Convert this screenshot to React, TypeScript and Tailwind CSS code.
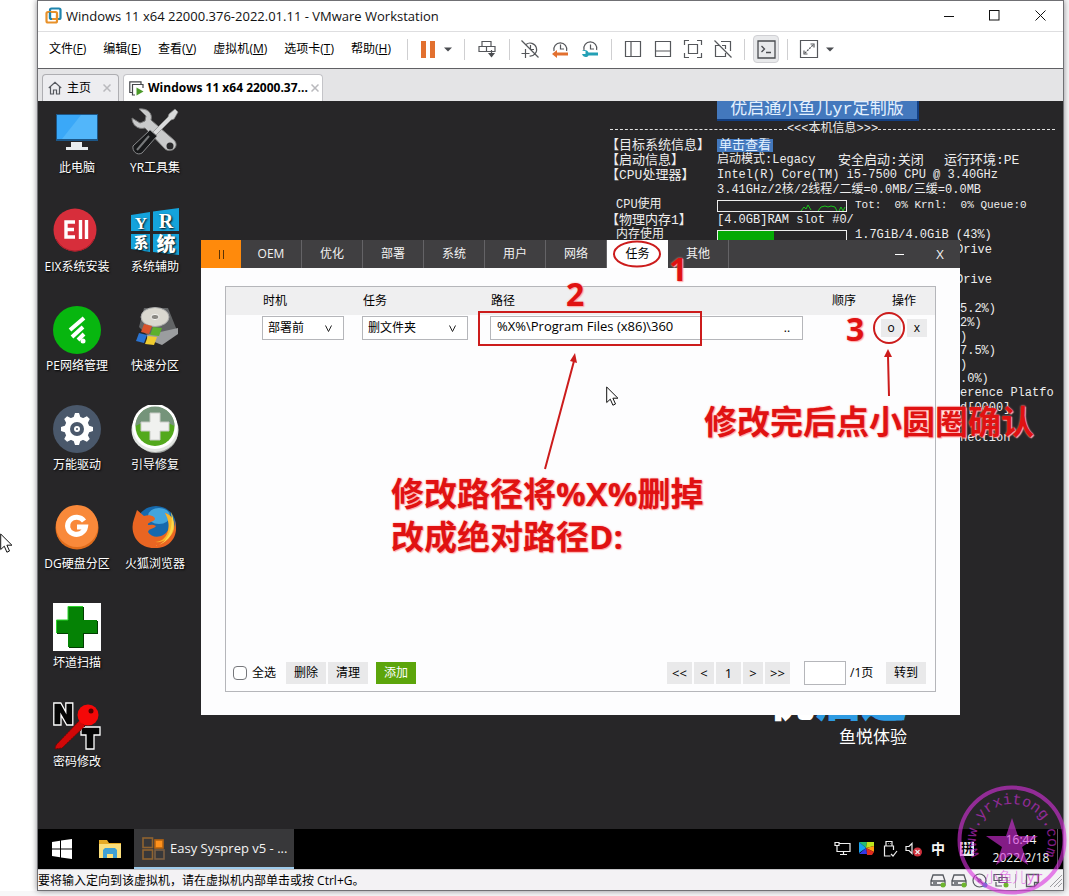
import type { ReactNode } from "react";

const ui = "font-['Open_Sans','Noto_Sans_CJK_SC',sans-serif]";
const mono = "font-['Liberation_Mono','Noto_Sans_CJK_SC',monospace]";

/* ---------- title bar, menu and toolbar ---------- */

function VmwareLogo() {
  return (
    <svg width="17" height="17" viewBox="0 0 17 17" fill="none" strokeWidth="2.2">
      <rect x="5" y="1.5" width="10.5" height="10.5" rx="1.5" stroke="#1f84ad" />
      <rect x="1.5" y="5" width="10.5" height="10.5" rx="1.5" stroke="#e8912a" />
      <path d="M5 12V5.200" stroke="#1f84ad" />
      <path d="M7 12h5V8" stroke="#e8912a" />
    </svg>
  );
}

function TitleBar() {
  return (
    <header className="flex h-[31px] items-center border-b border-[#dedee0] bg-white pb-px pl-[7px]">
      <VmwareLogo />
      <h1 className="ml-1 flex-1 whitespace-nowrap text-[13px] leading-5 text-[#111]">
        Windows 11 x64 22000.376-2022.01.11 - VMware Workstation
      </h1>
      <button aria-label="最小化" className="flex h-[28px] w-[45px] items-center justify-center">
        <svg width="11" height="11" stroke="#111"><path d="M0 6.500h10" /></svg>
      </button>
      <button aria-label="最大化" className="flex h-[28px] w-[45px] items-center justify-center">
        <svg width="11" height="11" stroke="#111" fill="none"><rect x=".5" y=".5" width="9.500" height="9.500" /></svg>
      </button>
      <button aria-label="关闭" className="flex h-[28px] w-[46px] items-center justify-center">
        <svg width="11" height="11" stroke="#111"><path d="M.5 .5l10 10M10.500 .5l-10 10" /></svg>
      </button>
    </header>
  );
}

const menus = [
  ["文件", "F"],
  ["编辑", "E"],
  ["查看", "V"],
  ["虚拟机", "M"],
  ["选项卡", "T"],
  ["帮助", "H"],
];

function ToolIcon({ children, label }: { children: ReactNode; label: string }) {
  return (
    <button aria-label={label} className="flex h-[28px] w-[30px] items-center justify-center">
      <svg width="20" height="20" viewBox="0 0 20 20" fill="none" stroke="#55575b" strokeWidth="1.2">
        {children}
      </svg>
    </button>
  );
}

function Sep() {
  return <span className="h-[21px] w-px bg-[#cfcfd1]" />;
}

function Caret() {
  return (
    <svg width="8" height="5" viewBox="0 0 8 5"><path d="M0 .5h8L4 4.500z" fill="#4a4c50" /></svg>
  );
}

function MenuBar() {
  return (
    <div className="flex h-[37px] items-center border-b border-[#606064] bg-white pb-[2px] pl-[11px]">
      <nav className="flex w-[358px] gap-[17px] whitespace-nowrap text-[12px] leading-4 text-black">
        {menus.map(([name, key]) => (
          <button key={key}>
            {name}(<u>{key}</u>)
          </button>
        ))}
      </nav>
      <Sep />
      <button aria-label="挂起" className="ml-[13px] flex gap-1">
        <span className="h-[17px] w-[5px] bg-[#e2702f]" />
        <span className="h-[17px] w-[5px] bg-[#e2702f]" />
      </button>
      <button aria-label="电源选项" className="mr-3 ml-[9px] py-2"><Caret /></button>
      <Sep />
      <div className="px-[7px]">
        <ToolIcon label="发送 Ctrl+Alt+Del">
          <path d="M5 2.500h9v5H5zM2 7.500h7.500v5H2zM9.500 7.500H18v5H9.500z" />
          <path d="M14.500 11v4" />
          <path d="M11 14h7l-3.500 4.500z" fill="#4a4c50" stroke="none" />
        </ToolIcon>
      </div>
      <Sep />
      <div className="ml-[5px] flex">
        <ToolIcon label="拍摄快照">
          <path d="M6 5.500a6.500 6.500 0 1 1 3.500 11.500M10.500 6v4.500H14M1.500 1.500l17 17M5.500 10v9M1.500 14.500h8" />
        </ToolIcon>
        <ToolIcon label="恢复快照">
          <path d="M4 12a6.500 6.500 0 1 1 12.600 0M10.500 5.500V10H14" />
          <path d="M2 15l5-4v2.500h11v3H7V19z" fill="#e2702f" stroke="none" />
        </ToolIcon>
        <ToolIcon label="管理快照">
          <path d="M4 11a6.500 6.500 0 1 1 12.600 0M10.500 5.500V10H14" />
          <path d="M2 12h3.500v3H2c1 3.500 5 4 6.500 1.500H18v-3H8.500C7 10.500 3.500 10.500 2 12z" fill="#24a0b5" stroke="none" />
        </ToolIcon>
      </div>
      <span className="mr-[6px] ml-[6px] h-[21px] w-px bg-[#cfcfd1]" />
      <div className="mr-[6px] flex">
        <ToolIcon label="显示库"><path d="M2.500 2.500h15v15h-15zM8 2.500v15" /></ToolIcon>
        <ToolIcon label="缩略图栏"><path d="M2.500 2.500h15v15h-15zM2.500 12h15" /></ToolIcon>
        <ToolIcon label="全屏"><path d="M1.500 6V1.500H6M14 1.500h4.500V6M18.500 14v4.500H14M6 18.500H1.500V14M5.500 5.500h9v9h-9z" /></ToolIcon>
        <ToolIcon label="Unity"><path d="M8 2.500h9.500v9.500M6 6.500H2.500V17.500h10V14M9 6.500h3.500V10M1.500 1.500l17 17" /></ToolIcon>
      </div>
      <Sep />
      <button aria-label="控制台视图" className="mx-[8px] flex h-[28px] w-[26px] items-center justify-center rounded-sm border border-[#d0d0d4] bg-[#e8e9eb]">
        <svg width="19" height="19" viewBox="0 0 19 19" fill="none" stroke="#4a4c50" strokeWidth="1.3">
          <path d="M1 1h17v17H1zM4.500 6l3 3-3 3M9 12.500h5" />
        </svg>
      </button>
      <Sep />
      <div className="ml-[6px]">
        <ToolIcon label="自由拉伸">
          <path d="M1.500 1.500h17v17h-17z" />
          <path d="M11.500 5h3.500v3.500M8.500 15H5v-3.500" />
          <path d="M6 14l8-8" strokeDasharray="2 1" />
        </ToolIcon>
      </div>
      <button aria-label="拉伸选项" className="ml-[2px] py-2"><Caret /></button>
    </div>
  );
}

function TabClose() {
  return (
    <svg width="8" height="8" stroke="#b9b9bd" strokeWidth="1.500"><path d="M.5 .5l7 7M7.500 .5l-7 7" /></svg>
  );
}

function TabBar() {
  return (
    <div className="flex h-[32px] items-end gap-1 bg-[#e4e4e6] pl-1 text-[12px] leading-4 text-black">
      <button className="flex h-[27px] w-[77px] items-center rounded-t border border-b-0 border-[#aeaeb2] bg-[#ededf0] pl-[5px]">
        <svg width="14" height="14" viewBox="0 0 14 14" fill="none" stroke="#55585e" strokeWidth="1.200">
          <path d="M.8 7L7 1.200 13.200 7M2.500 6v7H5.500V9h3v4h3V6" />
        </svg>
        <span className="mr-[12px] ml-[5px]">主页</span>
        <TabClose />
      </button>
      <button className="flex h-[27px] w-[200px] items-center rounded-t border border-b-0 border-[#c4c4c8] bg-white pl-[5px]">
        <svg width="15" height="15" viewBox="0 0 15 15" fill="none" stroke="#45474b" strokeWidth="1.200">
          <path d="M3 11.500H.8V.8H12V3M6 14H3.500V3.500H14V7" />
          <path d="M7.500 6.500l7 4-7 4z" fill="#4c9a2a" stroke="none" />
        </svg>
        <span className="mr-[3px] ml-1 whitespace-nowrap font-bold">Windows 11 x64 22000.37...</span>
        <TabClose />
      </button>
    </div>
  );
}

/* ---------- desktop icons ---------- */

const glyphs: Record<string, ReactNode> = {
  pc: (
    <>
      <rect x="3" y="6" width="42" height="27" fill="#1c5687" />
      <rect x="4" y="7" width="40" height="24" fill="#3aa8f8" />
      <path d="M28 7h16v24H9z" fill="#52b6fa" />
      <path d="M18 34h11v5h6v3H13v-3h5z" fill="#e9edf0" />
    </>
  ),
  tools: (
    <>
      <path d="M1 10l8 5 5-2 1-5-7-7c8-1 14 4 12 11l23 20c6 6-2 14-9 9L14 20C7 22 1 17 1 10z" fill="#c9cacb" stroke="#777" />
      <circle cx="39" cy="38" r="3.500" fill="#29292b" />
      <path d="M44 1l3 3-4 7-3 1-17 17-3-3 17-17 1-3z" fill="#d9dadb" stroke="#888" strokeWidth=".7" />
      <path d="M19 22l7 6-15 17c-5 3-10-2-9-7z" fill="#17181a" stroke="#8b8c8e" />
      <path d="M18 28L6 42" stroke="#77797b" strokeWidth="2" />
    </>
  ),
  eix: (
    <>
      <circle cx="22" cy="23" r="21.500" fill="#d72e3b" />
      <path d="M3 32a21 21 0 0 0 38 0" fill="none" stroke="#a81f2c" />
      <path d="M22 15H13v15h9M13 22.500h8M27.500 13v19M33.500 13v19" fill="none" stroke="#fff" strokeWidth="3.400" />
    </>
  ),
  yr: (
    <>
      <path d="M0 8l19-3v19H0zM22 4.500L48 1v23H22zM0 27h19v18L0 42zM22 27h26v21l-26-3z" fill="#14a3dc" />
      <g fill="#fff" fontWeight="900" textAnchor="middle">
        <text x="10" y="22" fontSize="17" fontFamily="Liberation Serif, serif">Y</text>
        <text x="35" y="21" fontSize="20" fontFamily="Liberation Serif, serif">R</text>
        <text x="10" y="41" fontSize="15" fontFamily="Noto Sans CJK SC, sans-serif">系</text>
        <text x="35" y="44" fontSize="19" fontFamily="Noto Sans CJK SC, sans-serif">统</text>
      </g>
    </>
  ),
  net: (
    <>
      <circle cx="24" cy="24" r="24" fill="#07b60f" />
      <path d="M17 24l14-12M19 31l11-10M25 34l6-6" stroke="#fff" strokeWidth="4" />
      <circle cx="30" cy="35" r="2.500" fill="#fff" />
    </>
  ),
  disk: (
    <>
      <path d="M13 2h24l10 25-17 11-14-9-8-8z" fill="#626466" />
      <path d="M16 29l31-7v6L31 39 16 33z" fill="#9b9d9f" />
      <ellipse cx="24" cy="11" rx="14" ry="9.500" fill="#dad8d0" stroke="#aaa" />
      <ellipse cx="24" cy="11" rx="4" ry="2.600" fill="#8b8a85" stroke="#f4f4f0" />
      <path d="M13 18l8 2-3 8-8-2z" fill="#d9532c" />
      <path d="M22 21l9 1-3 8-9-1z" fill="#5cb02e" />
      <path d="M8 27l8 2-3 8-8-2z" fill="#2b73d0" />
      <path d="M17 30l9 1-3 8-9-1z" fill="#f1cc2f" />
    </>
  ),
  gear: (
    <>
      <circle cx="24" cy="24" r="24" fill="#4a586b" />
      <g fill="#fff">
        <circle cx="24" cy="24" r="12.500" />
        {[0, 45, 90, 135].map((a) => (
          <path key={a} d="M22 8h4l2 6v20l-2 6h-4l-2-6V14z" transform={`rotate(${a} 24 24)`} />
        ))}
      </g>
      <circle cx="24" cy="24" r="7" fill="#4a586b" />
      <circle cx="24" cy="24" r="3" fill="#fff" />
      <circle cx="24" cy="24" r="1" fill="#4a586b" />
    </>
  ),
  repair: (
    <>
      <ellipse cx="25" cy="27" rx="22" ry="21" fill="#9fa3a0" />
      <ellipse cx="24" cy="25" rx="23.500" ry="22" fill="#e2e5e2" />
      <circle cx="24" cy="21.500" r="22.500" fill="#fff" />
      <circle cx="24" cy="21.500" r="19.500" fill="#53a91d" />
      <path d="M4.500 21a19.500 19.500 0 0 1 39 0c-10-6-29-6-39 0z" fill="#75947a" />
      <path d="M19 8h10v9h9v9h-9v9H19v-9h-9v-9h9z" fill="#f0f1ef" stroke="#c8cbc6" />
    </>
  ),
  dg: (
    <>
      <circle cx="24" cy="24" r="21.500" fill="#e06d1c" />
      <circle cx="24" cy="22" r="21" fill="#f9893a" />
      <path d="M31 17a9 8.500 0 1 0 1.500 6H24" fill="none" stroke="#fff" strokeWidth="5" />
    </>
  ),
  fox: (
    <>
      <circle cx="25" cy="22" r="20" fill="#1669ad" />
      <ellipse cx="28" cy="12" rx="11" ry="8" fill="#43a5dd" />
      <path d="M6 6l7 6c5-2 11 0 11 3-1 3-8 3-7 6 2 0 5-1 8 1-2 3-7 2-8 6 4 7 16 6 20-2 2-5 1-12-3-17 7 2 10 9 9 16 1-3 1-8 0-11 7 18-5 31-20 30C6 44-2 28 3 15z" fill="#e96522" />
      <path d="M34 9c7 2 10 9 9 16-2 9-11 14-19 13 12 0 18-15 10-29z" fill="#f9b62c" />
      <path d="M40 8c7 15 0 31-16 34 12-2 19-17 16-34z" fill="#fbd84b" />
    </>
  ),
  cross: (
    <>
      <path d="M0 0h48v48H0z" fill="#fff" />
      <path d="M16 4h15v14h14v13H31v14H16V31H4V18h12z" fill="#003e00" />
      <path d="M15 3h15v14h14v13H30v14H15V30H3V17h12z" fill="#058205" />
      <path d="M15 17V3.500h15M3.500 30V17H15" fill="none" stroke="#2bd52b" />
    </>
  ),
  nt: (
    <>
      <g fill="#050505" stroke="#fff" strokeWidth="1.300">
        <path d="M.8 1h7l5 9V1h7v22h-6L8 13v10H.8z" />
        <path d="M28 25h19v8h-6v14h-8V33h-5z" />
      </g>
      <path d="M3 43L27 18l5 6L9 46l-7 1z" fill="#d00808" stroke="#780000" strokeDasharray="2 1" />
      <circle cx="35" cy="13" r="10.500" fill="#f50808" />
      <circle cx="38" cy="9" r="2.500" fill="#550000" />
    </>
  ),
};

const shortcuts = [
  ["pc", "此电脑"],
  ["eix", "EIX系统安装"],
  ["net", "PE网络管理"],
  ["gear", "万能驱动"],
  ["dg", "DG硬盘分区"],
  ["cross", "坏道扫描"],
  ["nt", "密码修改"],
  ["tools", "YR工具集"],
  ["yr", "系统辅助"],
  ["disk", "快速分区"],
  ["repair", "引导修复"],
  ["fox", "火狐浏览器"],
];

function Shortcuts() {
  return (
    <div className="grid w-[156px] grid-flow-col grid-cols-2 grid-rows-[repeat(7,99px)] pt-[7px]">
      {shortcuts.map(([icon, label]) => (
        <button key={icon} className="flex flex-col items-center gap-1 text-[12px] leading-4 text-white [text-shadow:1px_1px_2px_#000]">
          <svg width="48" height="48" viewBox="0 0 48 48">{glyphs[icon]}</svg>
          <span className="whitespace-nowrap">{label}</span>
        </button>
      ))}
    </div>
  );
}

/* ---------- system information on the wallpaper ---------- */

function InfoRow({ name, inset, children }: { name?: string; inset?: boolean; children?: ReactNode }) {
  return (
    <div className="flex h-[15px] items-center">
      <span className={inset ? "w-[111px] shrink-0 pl-[10px]" : "w-[111px] shrink-0 text-[13px]"}>{name}</span>
      {children}
    </div>
  );
}

const clipped = ["", "5.2%)", "2%)", ")", "7.5%)", ")", ".0%)"];

function SystemInfo() {
  return (
    <section className={`absolute top-0 left-[568px] w-[450px] overflow-hidden whitespace-pre text-[12px] leading-[15px] text-[#ededed] ${mono}`}>
      <button className="ml-[111px] flex h-[20px] w-[202px] items-center justify-center border-r-2 border-b-2 border-[#123f83] bg-[#4378bd] text-[17px] leading-5 text-[#e3f1ff]">
        优启通小鱼儿yr定制版
      </button>
      <div className="flex h-[17px] items-center pr-px pl-1">
        <span className="flex-1 border-t border-dashed border-[#e0e0e0]" />
        <span>{"<<<"}本机信息{">>>"}</span>
        <span className="flex-1 border-t border-dashed border-[#e0e0e0]" />
      </div>
      <InfoRow name="【目标系统信息】">
        <button className="h-[13px] bg-[#4378bd] px-[2px] text-[13px] leading-[13px] text-[#e3f1ff]">单击查看</button>
      </InfoRow>
      <InfoRow name="【启动信息】">
        <span className="w-[121px]">启动模式:Legacy</span>
        <span className="w-[106px] text-[13px]">安全启动:关闭</span>
        <span className="text-[13px]">运行环境:PE</span>
      </InfoRow>
      <InfoRow name="【CPU处理器】">Intel(R) Core(TM) i5-7500 CPU @ 3.40GHz</InfoRow>
      <InfoRow>3.41GHz/2核/2线程/二缓=0.0MB/三缓=0.0MB</InfoRow>
      <InfoRow name="CPU使用" inset>
        <svg width="130" height="12" fill="none">
          <rect x=".5" y=".5" width="129" height="11" stroke="#eee" />
          <path d="M84 11l3-4 2 2 2-4 3 5M101 11l3-4 4-1 3 1 3-1 4 1 2 4M122 11l2-4 2 4 2-4" stroke="#1bc51b" />
        </svg>
        <span className="ml-2 text-[11px]">Tot:  0% Krnl:  0% Queue:0</span>
      </InfoRow>
      <InfoRow name="【物理内存1】">[4.0GB]RAM slot #0/</InfoRow>
      <InfoRow name="内存使用" inset>
        <span className="h-[12px] w-[130px] border border-[#eee]"><span className="block h-[10px] w-[56px] bg-[#04a904]" /></span>
        <span className="ml-2">1.7GiB/4.0GiB (43%)</span>
      </InfoRow>
      <div className="pl-[350px]">
        <p>Drive</p>
        <p className="mt-[15px]">Drive</p>
        <div className="pl-1 leading-[14px]">
          {clipped.map((t, i) => (
            <p key={i} className="h-[14px]">{t}</p>
          ))}
        </div>
        <p className="pl-1">erence Platfo</p>
        <p className="pl-1">d[0000]</p>
        <p className="mt-[15px] pl-1">nection</p>
      </div>
    </section>
  );
}

/* ---------- Easy Sysprep dialog ---------- */

const dialogTabs = ["OEM", "优化", "部署", "系统", "用户", "网络", "任务", "其他"];
const gray = "flex h-[22px] items-center justify-center bg-[#e9e9ea]";

function Choice({ label, value, width }: { label: string; value: string; width: string }) {
  return (
    <label className={`relative flex h-6 items-center ${width}`}>
      <select aria-label={label} className="h-6 w-full appearance-none border border-[#b5b6ba] bg-white pl-[5px]">
        <option>{value}</option>
      </select>
      <svg className="pointer-events-none absolute right-3" width="7" height="7" fill="none" stroke="#222"><path d="M.5 .5l3 6 3-6" /></svg>
    </label>
  );
}

function Dialog() {
  return (
    <section className="absolute top-[139px] left-[163px] flex h-[475px] w-[759px] flex-col bg-[#fdfdfe] text-[12px] leading-4 text-black">
      <div className="flex h-[28px] items-stretch bg-[#403f41] text-[#f2f2f2]">
        <button aria-label="菜单" className="flex w-[40px] items-center justify-center gap-[3px] bg-[#ff8a0c]">
          <span className="h-[9px] w-px bg-[#5b3205]" />
          <span className="h-[9px] w-px bg-[#5b3205]" />
        </button>
        {dialogTabs.map((t) => (
          <button key={t} className={t === "任务" ? "w-[61px] bg-white text-black" : "w-[61px] border-r border-[#646366]"}>
            {t}
          </button>
        ))}
        <span className="flex-1" />
        <button aria-label="最小化" className="flex w-[41px] items-center justify-center"><span className="h-px w-[9px] bg-white" /></button>
        <button className="w-[40px] text-[13px]">X</button>
      </div>
      <div className="mx-6 mt-[18px] mb-[23px] flex flex-1 flex-col justify-between border border-[#b5b6ba]">
        <table className="w-full table-fixed border-collapse text-left">
          <colgroup>
            <col className="w-[36px]" />
            <col className="w-[100px]" />
            <col className="w-[128px]" />
            <col />
            <col className="w-[49px]" />
            <col className="w-[55px]" />
          </colgroup>
          <thead>
            <tr className="h-[28px] bg-[#efeff0]">
              <th />
              <th className="pl-px font-normal">时机</th>
              <th className="pl-px font-normal">任务</th>
              <th className="pl-px font-normal">路径</th>
              <th className="pl-px font-normal">顺序</th>
              <th className="pl-[12px] font-normal">操作</th>
            </tr>
          </thead>
          <tbody>
            <tr className="h-[26px]">
              <td />
              <td><Choice label="时机" value="部署前" width="w-[82px]" /></td>
              <td><Choice label="任务" value="删文件夹" width="w-[106px]" /></td>
              <td>
                <div className="mr-7 flex h-6 border border-[#b5b6ba] bg-white">
                  <input aria-label="路径" defaultValue="%X%\Program Files (x86)\360" className="min-w-0 flex-1 bg-transparent pb-1 pl-[6px] text-[13px] outline-none" />
                  <button aria-label="浏览" className="w-[30px]">..</button>
                </div>
              </td>
              <td />
              <td>
                <div className="flex gap-[6px] pl-px">
                  <button aria-label="确认" className="h-[18px] w-5 bg-[#ebebec] leading-4">o</button>
                  <button aria-label="删除任务" className="h-[18px] w-5 bg-[#ebebec] leading-4">x</button>
                </div>
              </td>
            </tr>
          </tbody>
        </table>
        <div className="flex items-center pr-[9px] pb-[6px] pl-[7px]">
          <label className="mr-[10px] flex items-center gap-[5px]">
            <input type="checkbox" className="h-[14px] w-[14px] appearance-none rounded-[4px] border border-[#76777b] bg-white" />
            全选
          </label>
          <button className={`${gray} mr-[2px] w-[40px]`}>删除</button>
          <button className={`${gray} mr-2 w-[40px]`}>清理</button>
          <button className="flex h-[22px] w-[40px] items-center justify-center bg-[#5ca50b] text-white">添加</button>
          <div className="ml-auto flex items-center gap-[2px]">
            <button className={`${gray} w-[25px] text-[13px]`}>{"<<"}</button>
            <button className={`${gray} w-[20px] text-[13px]`}>{"<"}</button>
            <button className={`${gray} w-[25px] text-[13px]`}>1</button>
            <button className={`${gray} w-[20px] text-[13px]`}>{">"}</button>
            <button className={`${gray} w-[25px] text-[13px]`}>{">>"}</button>
          </div>
          <input aria-label="页码" className="mr-1 ml-[14px] h-6 w-[42px] border border-[#b5b6ba] bg-white" />
          <span className="w-[36px]">/1页</span>
          <button className={`${gray} w-[40px]`}>转到</button>
        </div>
      </div>
    </section>
  );
}

/* ---------- guest taskbar ---------- */

function Taskbar() {
  return (
    <footer className="flex h-[40px] items-center bg-black text-[12px] leading-[18px] text-[#f4f4f4]">
      <button aria-label="开始" className="flex w-[48px] justify-center">
        <svg width="20" height="20" viewBox="0 0 20 20" fill="#fff"><path d="M0 3l8-1.200v7.700H0zM9 1.600L20 0v9.500H9zM0 10.500h8v7.700L0 17zM9 10.500h11V20L9 18.400z" /></svg>
      </button>
      <button aria-label="文件资源管理器" className="flex w-[48px] justify-center">
        <svg width="22" height="20" viewBox="0 0 22 20">
          <path d="M0 1h8l2 3h12v15H0z" fill="#e6aa25" />
          <path d="M0 5h22v14H0z" fill="#fbdf7c" />
          <path d="M4 19v-8l2-2h10l2 2v8h-4v-4H8v4z" fill="#3fa0d5" />
        </svg>
      </button>
      <button className="flex h-full w-[160px] items-center gap-[5px] border-b-2 border-[#9dcaea] bg-[#38383a] pl-2">
        <svg width="23" height="23" viewBox="0 0 23 23" fill="none" strokeWidth="1.600">
          <rect x="1" y="1" width="9.500" height="9.500" stroke="#8f6330" />
          <rect x="13" y="3" width="8" height="8" fill="#ff921c" stroke="#b76411" />
          <rect x="1" y="13" width="9.500" height="9" stroke="#8f6330" />
          <rect x="13" y="13" width="9" height="9" stroke="#7c6044" />
        </svg>
        <span className="whitespace-nowrap text-[13px]">Easy Sysprep v5 - ...</span>
      </button>
      <div className="ml-auto flex items-center gap-[7px]">
        <svg width="17" height="16" fill="none" stroke="#eee" strokeWidth="1.200"><path d="M5 2.500h11v8H3V7M9.500 10.500v3M6 13.500h7M1 1.500h4v3H1zM3 4.500V7" /></svg>
        <svg width="17" height="16" viewBox="0 0 17 16">
          <path d="M8 7L1 1h8z" fill="#25bc72" /><path d="M8 7l1-6h7v4z" fill="#bce51c" />
          <path d="M8 7l8-2v6z" fill="#ff9a12" /><path d="M8 7l8 4-2 3H9z" fill="#e02b20" />
          <path d="M8 7l1 6H1z" fill="#3438e8" /><path d="M8 7L1 1v11z" fill="#16a1ef" />
        </svg>
        <svg width="16" height="18" fill="none" stroke="#eee" strokeWidth="1.200"><path d="M4 1.500h6V6H4zM11.500 10V6h-9v10h6M9 14l2 2 4-5M6 3.500h.5M8 3.500h.5" /></svg>
        <svg width="18" height="16" fill="none" stroke="#eee" strokeWidth="1.200">
          <path d="M1 5.500h3l3-3v10l-3-3H1z" /><circle cx="12.500" cy="11" r="4.500" fill="#cf303c" stroke="none" />
          <path d="M10.500 9l4 4M14.500 9l-4 4" />
        </svg>
        <span className="w-[16px] text-center text-[14px] font-bold">中</span>
        <span className="ml-[7px] h-[14px] w-[14px] bg-[#eee] text-center text-[12px] leading-[14px] font-bold text-black">拼</span>
      </div>
      <div className="ml-[15px] w-[64px] text-center whitespace-nowrap">
        <p>16:44</p>
        <p>2022/2/18</p>
      </div>
      <span className="mr-[5px] ml-1 h-full w-px bg-[#58585a]" />
    </footer>
  );
}

function StatusBar() {
  return (
    <div className="flex h-[21px] items-center border-t border-[#c5c5c8] bg-[#f3f2f4] pt-px text-[12px] leading-4 text-black">
      <p className="flex-1">要将输入定向到该虚拟机，请在虚拟机内部单击或按 Ctrl+G。</p>
      <div className="flex items-center gap-[5px]">
        {[0, 1].map((n) => (
          <svg key={n} width="16" height="15" fill="none" stroke="#56595f" strokeWidth="1.300">
            <path d="M1 8l2-6h10l2 6M1 8h14v4H1zM3 10h4" /><circle cx="13" cy="12" r="2.500" fill="#6db52d" stroke="none" />
          </svg>
        ))}
        <svg width="16" height="15" fill="none" stroke="#56595f" strokeWidth="1.200"><circle cx="7.500" cy="7.500" r="6.500" /><circle cx="7.500" cy="7.500" r="1.500" /><path d="M4 4l7 7" /><circle cx="13" cy="12" r="2.500" fill="#2f9cc8" stroke="none" /></svg>
        <svg width="16" height="15" fill="none" stroke="#56595f" strokeWidth="1.200"><path d="M1 1.500h8v6H1zM6 4.500h8v5H6zM3 9v4h6" /><circle cx="13" cy="12" r="2.500" fill="#6db52d" stroke="none" /></svg>
        <span className="mr-1 ml-px h-[14px] w-px bg-[#b0b0b3]" />
        <svg width="16" height="15" fill="none" stroke="#56595f" strokeWidth="1.300"><path d="M1.500 1.500h12v8l-4 4h-8zM13.500 9.500h-4v4" /></svg>
        <svg className="ml-[3px]" width="14" height="15" stroke="#9c9ca0"><path d="M1 14L13 2M5 14l8-8M9 14l4-4" /></svg>
      </div>
    </div>
  );
}

/* ---------- pointers, stamp and red annotations ---------- */

function Pointer({ at }: { at: string }) {
  return (
    <svg className={`absolute ${at}`} width="13" height="21" viewBox="0 0 13 21">
      <path d="M.7 1v15.500l3.600-3.300 2.600 6 2.600-1.200-2.600-5.800h5z" fill="#fff" stroke="#111" />
    </svg>
  );
}

function Stamp() {
  return (
    <svg className="pointer-events-none absolute top-[784px] left-[956px]" width="112" height="112" viewBox="0 0 112 112" opacity=".6" fill="#da30e0">
      <defs><path id="ring" d="M23.400 71.200a36 36 0 1 1 64.100 2.300" /></defs>
      <circle cx="56" cy="56" r="52.500" fill="none" stroke="#da30e0" strokeWidth="4" />
      <path d="M56 34l6 18h20L66 63l6 18-16-11-16 11 6-18-16-11h20z" />
      <text fontSize="15" fontFamily="Liberation Mono, monospace"><textPath href="#ring">www.yrxitong.com</textPath></text>
      <text x="58" y="98" textAnchor="middle" fontSize="14" fontWeight="300" fontFamily="Liberation Mono, Noto Sans CJK SC, monospace">小鱼儿yr</text>
    </svg>
  );
}

const note = "absolute whitespace-nowrap font-bold text-[#e01212] [text-shadow:0_0_2px_#ff9a9a,1px_1px_1px_#ffb0b0]";

function Annotations() {
  return (
    <div className="pointer-events-none absolute top-0 left-0">
      <svg className="absolute top-0 left-0" width="1069" height="896" fill="none" stroke="#cc1c1c" strokeWidth="2">
        <ellipse cx="637" cy="254" rx="23" ry="12.500" />
        <rect x="479" y="312" width="222" height="33" />
        <circle cx="889" cy="328" r="15" />
        <path d="M545 469l29-108M889 396l-1-40" />
        <path d="M575 353l2 10-7-2zM888 349l4 8h-8z" fill="#cc1c1c" stroke="none" />
      </svg>
      <span className={`${note} top-[248px] left-[669px] text-[32px] leading-[42px]`}>1</span>
      <span className={`${note} top-[273px] left-[566px] text-[32px] leading-[42px]`}>2</span>
      <span className={`${note} top-[308px] left-[846px] text-[32px] leading-[42px]`}>3</span>
      <p className={`${note} top-[400px] left-[704px] text-[33px] leading-[43px]`}>修改完后点小圆圈确认</p>
      <p className={`${note} top-[472px] left-[391px] text-[33px] leading-[43px]`}>
        修改路径将%X%删掉<br />改成绝对路径D:
      </p>
    </div>
  );
}

export default function App() {
  return (
    <div className={`relative flex min-h-screen overflow-hidden bg-[#f7f7f8] pr-[5px] pb-[5px] ${ui}`}>
      <aside className="w-[37px] shrink-0 bg-white" />
      <main className="flex min-w-0 flex-1 flex-col border border-[#707074] shadow-[0_0_6px_#8a8a8e]">
        <TitleBar />
        <MenuBar />
        <TabBar />
        <div className="relative flex-1 overflow-hidden bg-[#272628]">
          <Shortcuts />
          <SystemInfo />
          <div className="absolute top-[572px] left-[731px] text-right text-white">
            <p className="text-[46px] leading-[50px] font-black">优<span className="text-[#2e9be2]">启通</span></p>
            <p className="pt-1 text-[17px] leading-5">鱼悦体验</p>
          </div>
          <Dialog />
        </div>
        <Taskbar />
        <StatusBar />
      </main>
      <Pointer at="top-[386px] left-[606px]" />
      <Pointer at="top-[533px] left-0" />
      <Annotations />
      <Stamp />
    </div>
  );
}
